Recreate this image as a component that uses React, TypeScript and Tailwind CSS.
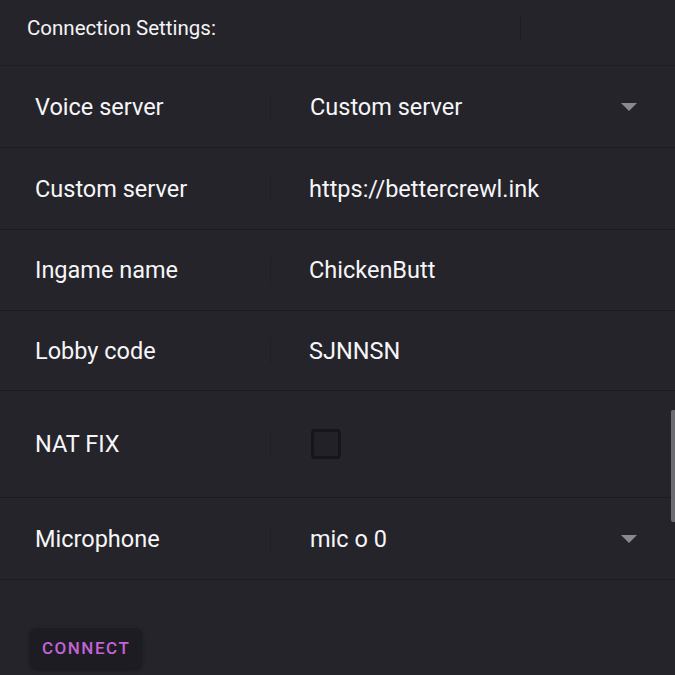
import React, { useState } from 'react'

type Row = {
  label: string
  value?: string
  kind: 'select' | 'text' | 'checkbox'
  height: string
}

const rows: Row[] = [
  { label: 'Voice server', value: 'Custom server', kind: 'select', height: 'h-[82px]' },
  { label: 'Custom server', value: 'https://bettercrewl.ink', kind: 'text', height: 'h-[82px]' },
  { label: 'Ingame name', value: 'ChickenButt', kind: 'text', height: 'h-[81px]' },
  { label: 'Lobby code', value: 'SJNNSN', kind: 'text', height: 'h-[80px]' },
  { label: 'NAT FIX', kind: 'checkbox', height: 'h-[107px]' },
  { label: 'Microphone', value: 'mic o 0', kind: 'select', height: 'h-[82px]' },
]

function Caret() {
  return (
    <svg width="16" height="8" viewBox="0 0 16 8" className="shrink-0">
      <path d="M0 0 L16 0 L8 8 Z" fill="#8a898e" />
    </svg>
  )
}

export default function App() {
  const [natFix, setNatFix] = useState(false)

  return (
    <div className="relative h-[675px] w-[675px] overflow-hidden bg-[#25242b] text-white font-['Roboto',sans-serif]">
      <div className="flex h-[66px] items-center border-b border-[#1f1e24]">
        <div className="w-[520px] pl-[27px] pb-[8px] text-[20.5px] text-[#f4f4f6]">Connection Settings:</div>
        <div className="mb-[12px] h-[26px] w-px bg-[#1f1e23]" />
      </div>

      {rows.map(row => (
        <div key={row.label} className={`flex items-center border-b border-[#1c1b20] ${row.height}`}>
          <div className="w-[270px] pl-[35px] pt-[2px] text-[23.5px] text-[#f6f6f8]">{row.label}</div>
          <div className="h-[26px] w-px bg-[#201e23]" />
          <div className="flex flex-1 items-center pl-[38px] pr-[38px]">
            {row.kind === 'checkbox' ? (
              <button
                onClick={() => setNatFix(!natFix)}
                className="ml-[2px] h-[30px] w-[30px] rounded-[4px] border-[3px] border-[#16151a] bg-[#222127]"
              />
            ) : (
              <>
                <span className={`flex-1 pt-[2px] text-[23.5px] text-[#f6f6f8] ${row.kind === 'select' ? 'pl-[1px]' : ''}`}>
                  {row.value}
                </span>
                {row.kind === 'select' && <Caret />}
              </>
            )}
          </div>
        </div>
      ))}

      <div className="pl-[30px] pt-[48px]">
        <button className="h-[40px] rounded-[6px] bg-[#1e1c23] px-[12px] pt-[1px] text-[17px] font-medium tracking-[1.5px] text-[#c463d6] shadow-[0_2px_4px_rgba(0,0,0,0.35)]">
          CONNECT
        </button>
      </div>

      <div className="absolute right-0 top-[410px] h-[112px] w-[4px] rounded-l-[2px] bg-[#6c6b72]" />
    </div>
  )
}
